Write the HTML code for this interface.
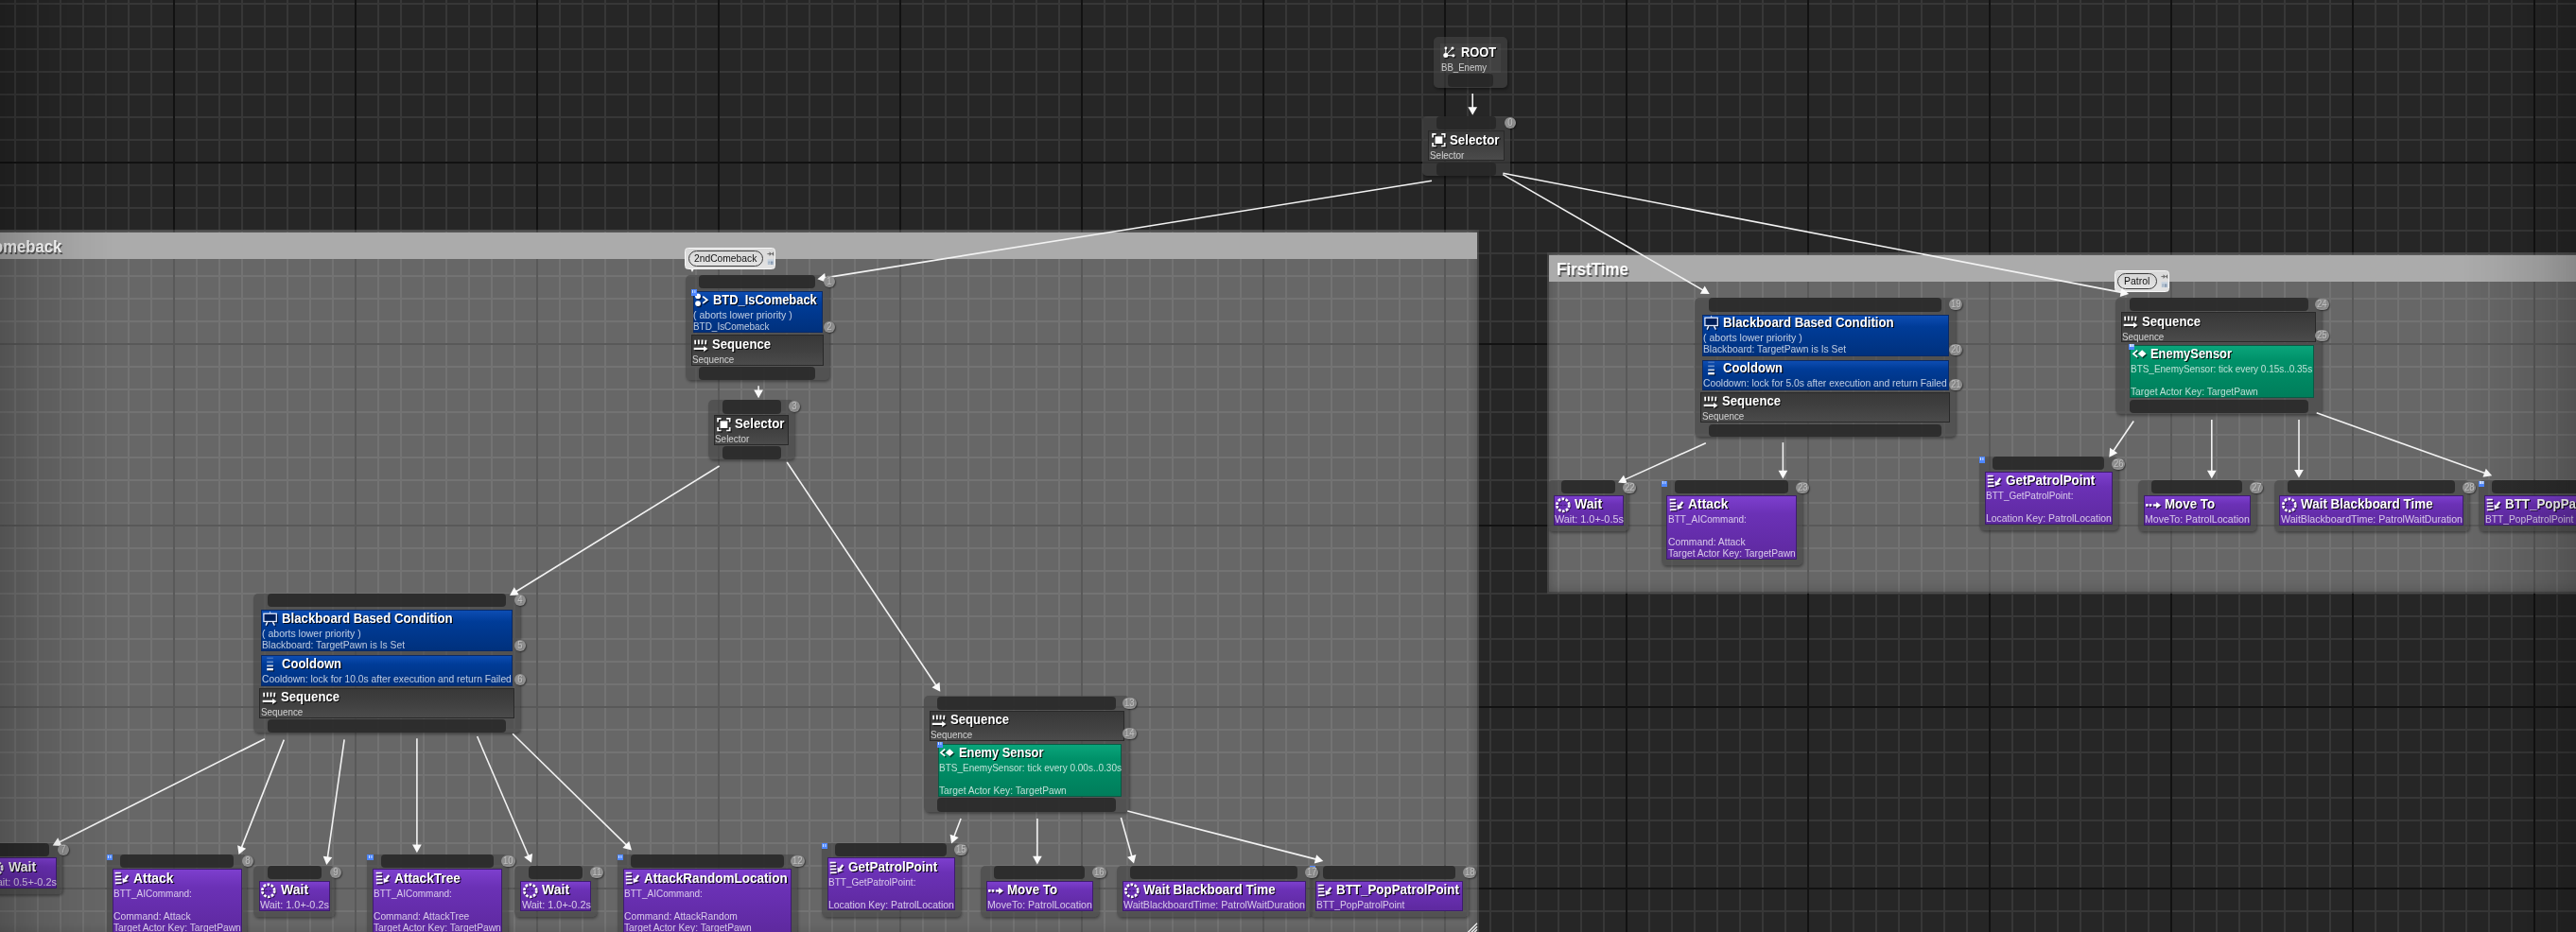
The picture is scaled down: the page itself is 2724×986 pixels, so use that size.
<!DOCTYPE html>
<html><head><meta charset="utf-8"><title>Behavior Tree</title><style>
html,body{margin:0;padding:0;background:#262626;}
body{width:2724px;height:986px;overflow:hidden;position:relative;font-family:"Liberation Sans",sans-serif;}
#g{will-change:transform;position:absolute;left:0;top:0;width:2724px;height:986px;overflow:hidden;}
#g>*{position:absolute;}
.grid{left:0;top:0;}
.cm{box-sizing:border-box;background:rgba(255,255,255,.302);box-shadow:inset 0 0 0 2px rgba(0,0,0,.22), inset 0 0 14px rgba(0,0,0,.30);}
.cmt{position:absolute;left:2px;right:2px;top:3px;height:27.6px;background:#ababab;}
.node{background:rgba(70,70,70,.62);border-radius:5px;box-shadow:1px 2px 3px rgba(0,0,0,.35);}
.rootin{background:rgba(255,255,255,.045);}
.pin{background:rgba(38,38,38,.82);border-radius:4px;}
.blk{box-sizing:border-box;border:1px solid rgba(0,0,0,.45);}
.cmp{background:linear-gradient(#383838,#414141 55%,#4b4b4b);border-color:#292929;}
.dec{background:linear-gradient(#0d4db3,#003c98 28%,#00317d);border-color:#0a2a66;}
.svc{background:linear-gradient(#0aa57b,#009169 28%,#007e5b);border-color:#0a5a44;}
.tsk{background:linear-gradient(#7d3fce,#6b31b6 28%,#5e299f);border-color:#3d1c6e;}
.t{white-space:nowrap;transform-origin:0 50%;display:block;line-height:normal;}
.tt{font-weight:700;font-size:15.0px;color:#fff;text-shadow:1.3px 1.4px .4px rgba(0,0,0,.9);}
.ts{font-size:10.6px;color:rgba(255,255,255,.74);}
.tc{font-weight:700;font-size:18.3px;color:#fff;text-shadow:1.5px 1.5px 0 rgba(0,0,0,.5);}
.tb{font-size:10.9px;color:#111;}
.ic{overflow:visible;}
.bdg{height:12px;border-radius:6px;background:#8f8f8f;box-shadow:1px 1px 1.5px rgba(0,0,0,.45);text-align:center;}
.bdg span{display:block;font-size:10.4px;line-height:12.6px;color:#bebebe;text-shadow:1px 1px 0 rgba(0,0,0,.15);transform:scaleX(.92);}
.bp{width:6.4px;height:6.4px;background:#4d86ff;}
.bp i{position:absolute;left:1.3px;top:.8px;width:1.3px;height:2.8px;background:#cfe0ff;box-shadow:2.4px 0 0 #cfe0ff;}
.bub{height:23.2px;box-sizing:border-box;background:linear-gradient(#d9d9d9,#e3e3e3);border:1.6px solid #f7f7f7;border-radius:3.5px;}
.pill{position:absolute;left:2.7px;top:2.5px;height:17px;box-sizing:border-box;border:1.2px solid #3a3a3a;border-radius:8.5px;background:linear-gradient(#d6d6d6,#e4e4e4);}
.bi{position:absolute;right:.2px;top:2.7px;}
.tail{position:absolute;left:5.4px;top:21.4px;width:0;height:0;border-left:2.4px solid transparent;border-right:2.4px solid transparent;border-top:4.4px solid #f4f4f4;}
.lines{left:0;top:0;pointer-events:none;}
.vig{left:0;top:0;width:2724px;height:986px;pointer-events:none;background:linear-gradient(to right,rgba(0,0,0,.2),rgba(0,0,0,.1) 38px,rgba(0,0,0,.03) 85px,transparent 120px,transparent calc(100% - 120px),rgba(0,0,0,.03) calc(100% - 85px),rgba(0,0,0,.1) calc(100% - 38px),rgba(0,0,0,.2));}
</style></head><body><div id="g">
<svg class="grid" width="2724" height="986" viewBox="0 0 2724 986"><defs><pattern id="pm" x="4" y="16" width="24" height="24" patternUnits="userSpaceOnUse"><path d="M0 12H24M12 0V24" stroke="#373737" stroke-width="2" fill="none"/></pattern><pattern id="pM" x="88" y="76" width="192" height="192" patternUnits="userSpaceOnUse"><path d="M0 96H192M96 0V192" stroke="#121212" stroke-width="2" fill="none"/></pattern></defs><rect width="2724" height="986" fill="url(#pm)"/><rect width="2724" height="986" fill="url(#pM)"/></svg>
<div class="cm" style="left:-29.30px;top:243.40px;width:1593.50px;height:746.60px"><div class="cmt"></div></div>
<span class="t tc" style="left:-18.70px;top:250.44px;transform:scaleX(0.9105);">Comeback</span>
<div class="cm" style="left:1636.30px;top:267.00px;width:1200.00px;height:360.80px"><div class="cmt"></div></div>
<span class="t tc" style="left:1645.60px;top:274.04px;transform:scaleX(0.9272);">FirstTime</span>

<div class="node" style="left:1516.00px;top:39.00px;width:78.00px;height:53.50px"></div>
<div class="rootin" style="left:1523px;top:46.2px;width:64px;height:30.4px"></div>
<div class="pin" style="left:1531.00px;top:78.00px;width:47.80px;height:14.00px"></div>
<svg class="ic" style="left:1526.00px;top:48.30px" width="17" height="17" viewBox="0 0 17 17" ><g transform="translate(1.2,1.3)" fill="#000" stroke="#000" opacity=".6"><circle cx="2.8" cy="10.5" r="2.5" stroke="none"/><circle cx="2.9" cy="3" r="1.4" stroke="none"/><circle cx="10" cy="3" r="1.6" stroke="none"/><circle cx="10.9" cy="10.8" r="1.6" stroke="none"/><path d="M2.8 10.5L2.9 3M2.8 10.5L10 3M2.8 10.5L10.9 10.8" fill="none" stroke-width="1"/></g><g fill="#fff" stroke="#fff"><circle cx="2.8" cy="10.5" r="2.5" stroke="none"/><circle cx="2.9" cy="3" r="1.4" stroke="none"/><circle cx="10" cy="3" r="1.6" stroke="none"/><circle cx="10.9" cy="10.8" r="1.6" stroke="none"/><path d="M2.8 10.5L2.9 3M2.8 10.5L10 3M2.8 10.5L10.9 10.8" fill="none" stroke-width="1"/></g></svg>
<span class="t tt" style="left:1545.00px;top:46.42px;transform:scaleX(0.8585);">ROOT</span>
<span class="t ts" style="left:1524.40px;top:65.41px;transform:scaleX(0.9071);">BB_Enemy</span>
<div class="node" style="left:1504.30px;top:123.00px;width:92.70px;height:63.00px"></div>
<div class="pin" style="left:1518.90px;top:123.20px;width:63.50px;height:14.30px"></div>
<div class="pin" style="left:1518.90px;top:172.00px;width:63.50px;height:13.50px"></div>
<div class="blk cmp" style="left:1510.20px;top:138.30px;width:80.90px;height:32.20px"></div>
<svg class="ic" style="left:1512.60px;top:140.40px" width="17" height="17" viewBox="0 0 17 17" ><g transform="translate(1.2,1.3)" fill="#000" stroke="#000" opacity=".6"><rect x="4.6" y="4.4" width="7.8" height="7.6" stroke="none"/><path d="M5.6 1.9H2.1V5.4M11.2 1.9H14.7V5.4M5.6 14.5H2.1V11M11.2 14.5H14.7V11" fill="none" stroke-width="1.7"/></g><g fill="#fff" stroke="#fff"><rect x="4.6" y="4.4" width="7.8" height="7.6" stroke="none"/><path d="M5.6 1.9H2.1V5.4M11.2 1.9H14.7V5.4M5.6 14.5H2.1V11M11.2 14.5H14.7V11" fill="none" stroke-width="1.7"/></g></svg>
<span class="t tt" style="left:1532.60px;top:138.92px;transform:scaleX(0.8869);">Selector</span>
<span class="t ts" style="left:1511.70px;top:157.81px;transform:scaleX(0.9360);">Selector</span>
<div class="node" style="left:724.50px;top:290.90px;width:152.50px;height:111.20px"></div>
<div class="pin" style="left:739.30px;top:291.10px;width:122.90px;height:14.30px"></div>
<div class="pin" style="left:739.30px;top:388.10px;width:122.90px;height:13.50px"></div>
<div class="blk dec" style="left:732.70px;top:308.30px;width:137.10px;height:44.10px"></div>
<svg class="ic" style="left:735.10px;top:310.10px" width="17" height="17" viewBox="0 0 17 17" ><g transform="translate(1.2,1.3)" fill="#000" stroke="#000" opacity=".6"><circle cx="3.05" cy="3.35" r="2.9" stroke="none"/><circle cx="3.05" cy="11.1" r="2.9" stroke="none"/><path d="M8.2 3.65L12.85 7.2L8.2 10.8" fill="none" stroke-width="1.7"/></g><g fill="#fff" stroke="#fff"><circle cx="3.05" cy="3.35" r="2.9" stroke="none"/><circle cx="3.05" cy="11.1" r="2.9" stroke="none"/><path d="M8.2 3.65L12.85 7.2L8.2 10.8" fill="none" stroke-width="1.7"/></g></svg>
<span class="t tt" style="left:754.20px;top:308.02px;transform:scaleX(0.8609);">BTD_IsComeback</span>
<span class="t ts" style="left:733.30px;top:327.11px;transform:scaleX(0.9930);">( aborts lower priority )</span>
<span class="t ts" style="left:733.30px;top:339.06px;transform:scaleX(0.9371);">BTD_IsComeback</span>
<div class="blk cmp" style="left:730.50px;top:354.40px;width:140.90px;height:32.20px"></div>
<svg class="ic" style="left:732.90px;top:356.50px" width="17" height="17" viewBox="0 0 17 17" ><g transform="translate(1.2,1.3)" fill="#000" stroke="#000" opacity=".6"><path d="M2.1 2.7L2.3 7.2M5.8 2.6L5.9 7.2M9.6 2.6L9.5 7.2M13.4 2.7L13.1 7.2" fill="none" stroke-width="1.8"/><path d="M0.7 11.9H12" fill="none" stroke-width="2.2"/><path d="M11.2 8.9L15.4 11.9L11.2 14.9Z" stroke="none"/></g><g fill="#fff" stroke="#fff"><path d="M2.1 2.7L2.3 7.2M5.8 2.6L5.9 7.2M9.6 2.6L9.5 7.2M13.4 2.7L13.1 7.2" fill="none" stroke-width="1.8"/><path d="M0.7 11.9H12" fill="none" stroke-width="2.2"/><path d="M11.2 8.9L15.4 11.9L11.2 14.9Z" stroke="none"/></g></svg>
<span class="t tt" style="left:752.90px;top:355.02px;transform:scaleX(0.8749);">Sequence</span>
<span class="t ts" style="left:732.00px;top:373.91px;transform:scaleX(0.9279);">Sequence</span>
<div class="bp" style="left:730.90px;top:306.40px"><i></i></div>
<div class="node" style="left:748.90px;top:423.20px;width:91.20px;height:63.00px"></div>
<div class="pin" style="left:763.50px;top:423.40px;width:62.00px;height:14.30px"></div>
<div class="pin" style="left:763.50px;top:472.20px;width:62.00px;height:13.50px"></div>
<div class="blk cmp" style="left:754.80px;top:438.50px;width:79.40px;height:32.20px"></div>
<svg class="ic" style="left:757.20px;top:440.60px" width="17" height="17" viewBox="0 0 17 17" ><g transform="translate(1.2,1.3)" fill="#000" stroke="#000" opacity=".6"><rect x="4.6" y="4.4" width="7.8" height="7.6" stroke="none"/><path d="M5.6 1.9H2.1V5.4M11.2 1.9H14.7V5.4M5.6 14.5H2.1V11M11.2 14.5H14.7V11" fill="none" stroke-width="1.7"/></g><g fill="#fff" stroke="#fff"><rect x="4.6" y="4.4" width="7.8" height="7.6" stroke="none"/><path d="M5.6 1.9H2.1V5.4M11.2 1.9H14.7V5.4M5.6 14.5H2.1V11M11.2 14.5H14.7V11" fill="none" stroke-width="1.7"/></g></svg>
<span class="t tt" style="left:777.20px;top:439.12px;transform:scaleX(0.8869);">Selector</span>
<span class="t ts" style="left:756.30px;top:458.01px;transform:scaleX(0.9360);">Selector</span>
<div class="node" style="left:268.20px;top:627.90px;width:281.50px;height:147.40px"></div>
<div class="pin" style="left:283.00px;top:628.10px;width:251.90px;height:14.30px"></div>
<div class="pin" style="left:283.00px;top:761.30px;width:251.90px;height:13.50px"></div>
<div class="blk dec" style="left:276.40px;top:645.30px;width:266.10px;height:44.10px"></div>
<svg class="ic" style="left:278.80px;top:647.10px" width="17" height="17" viewBox="0 0 17 17" ><g transform="translate(1.2,1.2)" opacity=".55"><rect x="-0.1" y="2.2" width="13.4" height="8.3" fill="none" stroke="#000" stroke-width="1.3"/><path d="M3.7 11.1L2.1 14.6M9.5 11.1L11.4 14.6" fill="none" stroke="#000" stroke-width="1.4"/></g><rect x="-0.1" y="2.2" width="13.4" height="8.3" fill="#00205a" stroke="#e4ecff" stroke-width="1.3"/><path d="M6.6 -0.2L5.6 1.6H7.6Z" fill="#e4ecff"/><path d="M3.7 11.1L2.1 14.6M9.5 11.1L11.4 14.6" fill="none" stroke="#f4f7ff" stroke-width="1.4"/></svg>
<span class="t tt" style="left:297.90px;top:645.02px;transform:scaleX(0.8808);">Blackboard Based Condition</span>
<span class="t ts" style="left:277.00px;top:664.11px;transform:scaleX(0.9930);">( aborts lower priority )</span>
<span class="t ts" style="left:277.00px;top:676.06px;transform:scaleX(0.9726);">Blackboard: TargetPawn is Is Set</span>
<div class="blk dec" style="left:276.40px;top:693.40px;width:266.10px;height:32.20px"></div>
<svg class="ic" style="left:278.80px;top:695.20px" width="17" height="17" viewBox="0 0 17 17" ><rect x="3.2" y="0.5" width="6.7" height="1.6" fill="#fff" opacity=".22"/><rect x="3.2" y="4.5" width="6.7" height="1.7" fill="#fff" opacity=".42"/><rect x="4.2" y="9.6" width="6.7" height="1.8" fill="#000" opacity=".4"/><rect x="3.2" y="8.5" width="6.7" height="1.8" fill="#fff" opacity=".78"/><rect x="4.4" y="13.2" width="6.7" height="2.3" fill="#000" opacity=".6"/><rect x="3.2" y="12" width="6.7" height="2.3" fill="#fff"/></svg>
<span class="t tt" style="left:297.90px;top:693.12px;transform:scaleX(0.8692);">Cooldown</span>
<span class="t ts" style="left:277.00px;top:712.21px;transform:scaleX(0.9719);">Cooldown: lock for 10.0s after execution and return Failed</span>
<div class="blk cmp" style="left:274.20px;top:727.60px;width:269.90px;height:32.20px"></div>
<svg class="ic" style="left:276.60px;top:729.70px" width="17" height="17" viewBox="0 0 17 17" ><g transform="translate(1.2,1.3)" fill="#000" stroke="#000" opacity=".6"><path d="M2.1 2.7L2.3 7.2M5.8 2.6L5.9 7.2M9.6 2.6L9.5 7.2M13.4 2.7L13.1 7.2" fill="none" stroke-width="1.8"/><path d="M0.7 11.9H12" fill="none" stroke-width="2.2"/><path d="M11.2 8.9L15.4 11.9L11.2 14.9Z" stroke="none"/></g><g fill="#fff" stroke="#fff"><path d="M2.1 2.7L2.3 7.2M5.8 2.6L5.9 7.2M9.6 2.6L9.5 7.2M13.4 2.7L13.1 7.2" fill="none" stroke-width="1.8"/><path d="M0.7 11.9H12" fill="none" stroke-width="2.2"/><path d="M11.2 8.9L15.4 11.9L11.2 14.9Z" stroke="none"/></g></svg>
<span class="t tt" style="left:296.60px;top:728.23px;transform:scaleX(0.8749);">Sequence</span>
<span class="t ts" style="left:275.70px;top:747.11px;transform:scaleX(0.9279);">Sequence</span>
<div class="node" style="left:976.60px;top:736.30px;width:217.80px;height:122.80px"></div>
<div class="pin" style="left:991.20px;top:736.50px;width:188.60px;height:14.30px"></div>
<div class="pin" style="left:991.20px;top:844.40px;width:188.60px;height:14.20px"></div>
<div class="blk cmp" style="left:982.50px;top:751.60px;width:206.00px;height:32.20px"></div>
<svg class="ic" style="left:984.90px;top:753.70px" width="17" height="17" viewBox="0 0 17 17" ><g transform="translate(1.2,1.3)" fill="#000" stroke="#000" opacity=".6"><path d="M2.1 2.7L2.3 7.2M5.8 2.6L5.9 7.2M9.6 2.6L9.5 7.2M13.4 2.7L13.1 7.2" fill="none" stroke-width="1.8"/><path d="M0.7 11.9H12" fill="none" stroke-width="2.2"/><path d="M11.2 8.9L15.4 11.9L11.2 14.9Z" stroke="none"/></g><g fill="#fff" stroke="#fff"><path d="M2.1 2.7L2.3 7.2M5.8 2.6L5.9 7.2M9.6 2.6L9.5 7.2M13.4 2.7L13.1 7.2" fill="none" stroke-width="1.8"/><path d="M0.7 11.9H12" fill="none" stroke-width="2.2"/><path d="M11.2 8.9L15.4 11.9L11.2 14.9Z" stroke="none"/></g></svg>
<span class="t tt" style="left:1004.90px;top:752.23px;transform:scaleX(0.8749);">Sequence</span>
<span class="t ts" style="left:984.00px;top:771.11px;transform:scaleX(0.9279);">Sequence</span>
<div class="blk svc" style="left:991.90px;top:786.90px;width:194.60px;height:56.00px"></div>
<svg class="ic" style="left:994.30px;top:788.70px" width="17" height="17" viewBox="0 0 17 17" ><g transform="translate(1.2,1.3)" fill="#000" stroke="#000" opacity=".6"><path d="M5.2 3.65L0.9 7.2L5.2 10.8" fill="none" stroke-width="1.7"/><path d="M10.2 3.3L14.55 7.2L10.2 11.1L5.85 7.2Z" stroke="none"/></g><g fill="#fff" stroke="#fff"><path d="M5.2 3.65L0.9 7.2L5.2 10.8" fill="none" stroke-width="1.7"/><path d="M10.2 3.3L14.55 7.2L10.2 11.1L5.85 7.2Z" stroke="none"/></g></svg>
<span class="t tt" style="left:1014.00px;top:786.62px;transform:scaleX(0.8579);">Enemy Sensor</span>
<span class="t ts" style="left:992.50px;top:805.71px;transform:scaleX(0.9445);">BTS_EnemySensor: tick every 0.00s..0.30s</span>
<span class="t ts" style="left:992.50px;top:829.61px;transform:scaleX(0.9674);">Target Actor Key: TargetPawn</span>
<div class="bp" style="left:990.90px;top:784.60px"><i></i></div>
<div class="node" style="left:1792.20px;top:315.10px;width:275.60px;height:147.40px"></div>
<div class="pin" style="left:1807.00px;top:315.30px;width:246.00px;height:14.30px"></div>
<div class="pin" style="left:1807.00px;top:448.50px;width:246.00px;height:13.50px"></div>
<div class="blk dec" style="left:1800.40px;top:332.50px;width:260.20px;height:44.10px"></div>
<svg class="ic" style="left:1802.80px;top:334.30px" width="17" height="17" viewBox="0 0 17 17" ><g transform="translate(1.2,1.2)" opacity=".55"><rect x="-0.1" y="2.2" width="13.4" height="8.3" fill="none" stroke="#000" stroke-width="1.3"/><path d="M3.7 11.1L2.1 14.6M9.5 11.1L11.4 14.6" fill="none" stroke="#000" stroke-width="1.4"/></g><rect x="-0.1" y="2.2" width="13.4" height="8.3" fill="#00205a" stroke="#e4ecff" stroke-width="1.3"/><path d="M6.6 -0.2L5.6 1.6H7.6Z" fill="#e4ecff"/><path d="M3.7 11.1L2.1 14.6M9.5 11.1L11.4 14.6" fill="none" stroke="#f4f7ff" stroke-width="1.4"/></svg>
<span class="t tt" style="left:1821.90px;top:332.23px;transform:scaleX(0.8808);">Blackboard Based Condition</span>
<span class="t ts" style="left:1801.00px;top:351.31px;transform:scaleX(0.9930);">( aborts lower priority )</span>
<span class="t ts" style="left:1801.00px;top:363.26px;transform:scaleX(0.9726);">Blackboard: TargetPawn is Is Set</span>
<div class="blk dec" style="left:1800.40px;top:380.60px;width:260.20px;height:32.20px"></div>
<svg class="ic" style="left:1802.80px;top:382.40px" width="17" height="17" viewBox="0 0 17 17" ><rect x="3.2" y="0.5" width="6.7" height="1.6" fill="#fff" opacity=".22"/><rect x="3.2" y="4.5" width="6.7" height="1.7" fill="#fff" opacity=".42"/><rect x="4.2" y="9.6" width="6.7" height="1.8" fill="#000" opacity=".4"/><rect x="3.2" y="8.5" width="6.7" height="1.8" fill="#fff" opacity=".78"/><rect x="4.4" y="13.2" width="6.7" height="2.3" fill="#000" opacity=".6"/><rect x="3.2" y="12" width="6.7" height="2.3" fill="#fff"/></svg>
<span class="t tt" style="left:1821.90px;top:380.33px;transform:scaleX(0.8692);">Cooldown</span>
<span class="t ts" style="left:1801.00px;top:399.41px;transform:scaleX(0.9705);">Cooldown: lock for 5.0s after execution and return Failed</span>
<div class="blk cmp" style="left:1798.20px;top:414.80px;width:264.00px;height:32.20px"></div>
<svg class="ic" style="left:1800.60px;top:416.90px" width="17" height="17" viewBox="0 0 17 17" ><g transform="translate(1.2,1.3)" fill="#000" stroke="#000" opacity=".6"><path d="M2.1 2.7L2.3 7.2M5.8 2.6L5.9 7.2M9.6 2.6L9.5 7.2M13.4 2.7L13.1 7.2" fill="none" stroke-width="1.8"/><path d="M0.7 11.9H12" fill="none" stroke-width="2.2"/><path d="M11.2 8.9L15.4 11.9L11.2 14.9Z" stroke="none"/></g><g fill="#fff" stroke="#fff"><path d="M2.1 2.7L2.3 7.2M5.8 2.6L5.9 7.2M9.6 2.6L9.5 7.2M13.4 2.7L13.1 7.2" fill="none" stroke-width="1.8"/><path d="M0.7 11.9H12" fill="none" stroke-width="2.2"/><path d="M11.2 8.9L15.4 11.9L11.2 14.9Z" stroke="none"/></g></svg>
<span class="t tt" style="left:1820.60px;top:415.43px;transform:scaleX(0.8749);">Sequence</span>
<span class="t ts" style="left:1799.70px;top:434.31px;transform:scaleX(0.9279);">Sequence</span>
<div class="node" style="left:2237.00px;top:314.80px;width:218.20px;height:122.80px"></div>
<div class="pin" style="left:2251.60px;top:315.00px;width:189.00px;height:14.30px"></div>
<div class="pin" style="left:2251.60px;top:422.90px;width:189.00px;height:14.20px"></div>
<div class="blk cmp" style="left:2242.90px;top:330.10px;width:206.40px;height:32.20px"></div>
<svg class="ic" style="left:2245.30px;top:332.20px" width="17" height="17" viewBox="0 0 17 17" ><g transform="translate(1.2,1.3)" fill="#000" stroke="#000" opacity=".6"><path d="M2.1 2.7L2.3 7.2M5.8 2.6L5.9 7.2M9.6 2.6L9.5 7.2M13.4 2.7L13.1 7.2" fill="none" stroke-width="1.8"/><path d="M0.7 11.9H12" fill="none" stroke-width="2.2"/><path d="M11.2 8.9L15.4 11.9L11.2 14.9Z" stroke="none"/></g><g fill="#fff" stroke="#fff"><path d="M2.1 2.7L2.3 7.2M5.8 2.6L5.9 7.2M9.6 2.6L9.5 7.2M13.4 2.7L13.1 7.2" fill="none" stroke-width="1.8"/><path d="M0.7 11.9H12" fill="none" stroke-width="2.2"/><path d="M11.2 8.9L15.4 11.9L11.2 14.9Z" stroke="none"/></g></svg>
<span class="t tt" style="left:2265.30px;top:330.73px;transform:scaleX(0.8749);">Sequence</span>
<span class="t ts" style="left:2244.40px;top:349.61px;transform:scaleX(0.9279);">Sequence</span>
<div class="blk svc" style="left:2252.30px;top:365.40px;width:195.00px;height:56.00px"></div>
<svg class="ic" style="left:2254.70px;top:367.20px" width="17" height="17" viewBox="0 0 17 17" ><g transform="translate(1.2,1.3)" fill="#000" stroke="#000" opacity=".6"><path d="M5.2 3.65L0.9 7.2L5.2 10.8" fill="none" stroke-width="1.7"/><path d="M10.2 3.3L14.55 7.2L10.2 11.1L5.85 7.2Z" stroke="none"/></g><g fill="#fff" stroke="#fff"><path d="M5.2 3.65L0.9 7.2L5.2 10.8" fill="none" stroke-width="1.7"/><path d="M10.2 3.3L14.55 7.2L10.2 11.1L5.85 7.2Z" stroke="none"/></g></svg>
<span class="t tt" style="left:2274.40px;top:365.13px;transform:scaleX(0.8596);">EnemySensor</span>
<span class="t ts" style="left:2252.90px;top:384.21px;transform:scaleX(0.9403);">BTS_EnemySensor: tick every 0.15s..0.35s</span>
<span class="t ts" style="left:2252.90px;top:408.11px;transform:scaleX(0.9674);">Target Actor Key: TargetPawn</span>
<div class="bp" style="left:2251.00px;top:363.60px"><i></i></div>
<div class="node" style="left:-20.00px;top:891.90px;width:86.30px;height:53.90px"></div>
<div class="pin" style="left:-5.40px;top:891.90px;width:57.10px;height:14.10px"></div>
<div class="blk tsk" style="left:-14.10px;top:907.40px;width:74.50px;height:32.20px"></div>
<svg class="ic" style="left:-11.70px;top:909.50px" width="17" height="17" viewBox="0 0 17 17" ><circle cx="8.8" cy="9.3" r="6.5" fill="none" stroke="#000" stroke-width="2.7" stroke-dasharray="2.65 1.434" opacity=".55"/><circle cx="7.8" cy="8.3" r="6.5" fill="none" stroke="#fff" stroke-width="2.7" stroke-dasharray="2.65 1.434"/><path d="M4.4 8.6H7M8.6 8.6H11.2" stroke="#34165e" stroke-width="1" opacity=".75"/></svg>
<span class="t tt" style="left:8.50px;top:908.02px;transform:scaleX(0.9355);">Wait</span>
<span class="t ts" style="left:-12.90px;top:926.91px;transform:scaleX(1.0240);">Wait: 0.5+-0.2s</span>
<div class="node" style="left:112.60px;top:903.80px;width:148.80px;height:89.60px"></div>
<div class="pin" style="left:127.20px;top:903.80px;width:119.60px;height:14.10px"></div>
<div class="blk tsk" style="left:118.50px;top:919.30px;width:137.00px;height:67.90px"></div>
<svg class="ic" style="left:120.90px;top:921.40px" width="17" height="17" viewBox="0 0 17 17" ><g transform="translate(1.2,1.3)" fill="#000" stroke="#000" opacity=".6"><path d="M0.6 2.7L6.8 2.5M0.7 6.3L7 6.1M0.8 9.7L7.3 9.5M0.8 13.3L7.6 13.1" fill="none" stroke-width="1.7"/><path d="M14.3 5L11.3 9.2" fill="none" stroke-width="2.3"/><path d="M8.6 7.7L8.8 13L14.7 11Z" stroke="none"/></g><g fill="#fff" stroke="#fff"><path d="M0.6 2.7L6.8 2.5M0.7 6.3L7 6.1M0.8 9.7L7.3 9.5M0.8 13.3L7.6 13.1" fill="none" stroke-width="1.7"/><path d="M14.3 5L11.3 9.2" fill="none" stroke-width="2.3"/><path d="M8.6 7.7L8.8 13L14.7 11Z" stroke="none"/></g></svg>
<span class="t tt" style="left:141.10px;top:919.92px;transform:scaleX(0.9258);">Attack</span>
<span class="t ts" style="left:119.70px;top:938.81px;transform:scaleX(0.9445);">BTT_AICommand:</span>
<span class="t ts" style="left:119.70px;top:962.71px;transform:scaleX(0.9760);">Command: Attack</span>
<span class="t ts" style="left:119.70px;top:974.66px;transform:scaleX(0.9674);">Target Actor Key: TargetPawn</span>
<div class="bp" style="left:112.80px;top:904.00px"><i></i></div>
<div class="node" style="left:268.10px;top:916.00px;width:86.30px;height:53.90px"></div>
<div class="pin" style="left:282.70px;top:916.00px;width:57.10px;height:14.10px"></div>
<div class="blk tsk" style="left:274.00px;top:931.50px;width:74.50px;height:32.20px"></div>
<svg class="ic" style="left:276.40px;top:933.60px" width="17" height="17" viewBox="0 0 17 17" ><circle cx="8.8" cy="9.3" r="6.5" fill="none" stroke="#000" stroke-width="2.7" stroke-dasharray="2.65 1.434" opacity=".55"/><circle cx="7.8" cy="8.3" r="6.5" fill="none" stroke="#fff" stroke-width="2.7" stroke-dasharray="2.65 1.434"/><path d="M4.4 8.6H7M8.6 8.6H11.2" stroke="#34165e" stroke-width="1" opacity=".75"/></svg>
<span class="t tt" style="left:296.60px;top:932.12px;transform:scaleX(0.9355);">Wait</span>
<span class="t ts" style="left:275.20px;top:951.01px;transform:scaleX(1.0240);">Wait: 1.0+-0.2s</span>
<div class="node" style="left:388.20px;top:903.80px;width:148.80px;height:89.60px"></div>
<div class="pin" style="left:402.80px;top:903.80px;width:119.60px;height:14.10px"></div>
<div class="blk tsk" style="left:394.10px;top:919.30px;width:137.00px;height:67.90px"></div>
<svg class="ic" style="left:396.50px;top:921.40px" width="17" height="17" viewBox="0 0 17 17" ><g transform="translate(1.2,1.3)" fill="#000" stroke="#000" opacity=".6"><path d="M0.6 2.7L6.8 2.5M0.7 6.3L7 6.1M0.8 9.7L7.3 9.5M0.8 13.3L7.6 13.1" fill="none" stroke-width="1.7"/><path d="M14.3 5L11.3 9.2" fill="none" stroke-width="2.3"/><path d="M8.6 7.7L8.8 13L14.7 11Z" stroke="none"/></g><g fill="#fff" stroke="#fff"><path d="M0.6 2.7L6.8 2.5M0.7 6.3L7 6.1M0.8 9.7L7.3 9.5M0.8 13.3L7.6 13.1" fill="none" stroke-width="1.7"/><path d="M14.3 5L11.3 9.2" fill="none" stroke-width="2.3"/><path d="M8.6 7.7L8.8 13L14.7 11Z" stroke="none"/></g></svg>
<span class="t tt" style="left:416.70px;top:919.92px;transform:scaleX(0.9119);">AttackTree</span>
<span class="t ts" style="left:395.30px;top:938.81px;transform:scaleX(0.9445);">BTT_AICommand:</span>
<span class="t ts" style="left:395.30px;top:962.71px;transform:scaleX(0.9642);">Command: AttackTree</span>
<span class="t ts" style="left:395.30px;top:974.66px;transform:scaleX(0.9674);">Target Actor Key: TargetPawn</span>
<div class="bp" style="left:388.40px;top:904.00px"><i></i></div>
<div class="node" style="left:544.40px;top:916.00px;width:86.30px;height:53.90px"></div>
<div class="pin" style="left:559.00px;top:916.00px;width:57.10px;height:14.10px"></div>
<div class="blk tsk" style="left:550.30px;top:931.50px;width:74.50px;height:32.20px"></div>
<svg class="ic" style="left:552.70px;top:933.60px" width="17" height="17" viewBox="0 0 17 17" ><circle cx="8.8" cy="9.3" r="6.5" fill="none" stroke="#000" stroke-width="2.7" stroke-dasharray="2.65 1.434" opacity=".55"/><circle cx="7.8" cy="8.3" r="6.5" fill="none" stroke="#fff" stroke-width="2.7" stroke-dasharray="2.65 1.434"/><path d="M4.4 8.6H7M8.6 8.6H11.2" stroke="#34165e" stroke-width="1" opacity=".75"/></svg>
<span class="t tt" style="left:572.90px;top:932.12px;transform:scaleX(0.9355);">Wait</span>
<span class="t ts" style="left:551.50px;top:951.01px;transform:scaleX(1.0240);">Wait: 1.0+-0.2s</span>
<div class="node" style="left:652.60px;top:903.80px;width:190.60px;height:89.60px"></div>
<div class="pin" style="left:667.20px;top:903.80px;width:161.40px;height:14.10px"></div>
<div class="blk tsk" style="left:658.50px;top:919.30px;width:178.80px;height:67.90px"></div>
<svg class="ic" style="left:660.90px;top:921.40px" width="17" height="17" viewBox="0 0 17 17" ><g transform="translate(1.2,1.3)" fill="#000" stroke="#000" opacity=".6"><path d="M0.6 2.7L6.8 2.5M0.7 6.3L7 6.1M0.8 9.7L7.3 9.5M0.8 13.3L7.6 13.1" fill="none" stroke-width="1.7"/><path d="M14.3 5L11.3 9.2" fill="none" stroke-width="2.3"/><path d="M8.6 7.7L8.8 13L14.7 11Z" stroke="none"/></g><g fill="#fff" stroke="#fff"><path d="M0.6 2.7L6.8 2.5M0.7 6.3L7 6.1M0.8 9.7L7.3 9.5M0.8 13.3L7.6 13.1" fill="none" stroke-width="1.7"/><path d="M14.3 5L11.3 9.2" fill="none" stroke-width="2.3"/><path d="M8.6 7.7L8.8 13L14.7 11Z" stroke="none"/></g></svg>
<span class="t tt" style="left:681.10px;top:919.92px;transform:scaleX(0.9017);">AttackRandomLocation</span>
<span class="t ts" style="left:659.70px;top:938.81px;transform:scaleX(0.9445);">BTT_AICommand:</span>
<span class="t ts" style="left:659.70px;top:962.71px;transform:scaleX(0.9699);">Command: AttackRandom</span>
<span class="t ts" style="left:659.70px;top:974.66px;transform:scaleX(0.9674);">Target Actor Key: TargetPawn</span>
<div class="bp" style="left:652.80px;top:904.00px"><i></i></div>
<div class="node" style="left:868.60px;top:891.90px;width:147.00px;height:77.70px"></div>
<div class="pin" style="left:883.20px;top:891.90px;width:117.80px;height:14.10px"></div>
<div class="blk tsk" style="left:874.50px;top:907.40px;width:135.20px;height:56.00px"></div>
<svg class="ic" style="left:876.90px;top:909.50px" width="17" height="17" viewBox="0 0 17 17" ><g transform="translate(1.2,1.3)" fill="#000" stroke="#000" opacity=".6"><path d="M0.6 2.7L6.8 2.5M0.7 6.3L7 6.1M0.8 9.7L7.3 9.5M0.8 13.3L7.6 13.1" fill="none" stroke-width="1.7"/><path d="M14.3 5L11.3 9.2" fill="none" stroke-width="2.3"/><path d="M8.6 7.7L8.8 13L14.7 11Z" stroke="none"/></g><g fill="#fff" stroke="#fff"><path d="M0.6 2.7L6.8 2.5M0.7 6.3L7 6.1M0.8 9.7L7.3 9.5M0.8 13.3L7.6 13.1" fill="none" stroke-width="1.7"/><path d="M14.3 5L11.3 9.2" fill="none" stroke-width="2.3"/><path d="M8.6 7.7L8.8 13L14.7 11Z" stroke="none"/></g></svg>
<span class="t tt" style="left:897.10px;top:908.02px;transform:scaleX(0.8980);">GetPatrolPoint</span>
<span class="t ts" style="left:875.70px;top:926.91px;transform:scaleX(0.9458);">BTT_GetPatrolPoint:</span>
<span class="t ts" style="left:875.70px;top:950.81px;transform:scaleX(0.9848);">Location Key: PatrolLocation</span>
<div class="bp" style="left:868.80px;top:892.10px"><i></i></div>
<div class="node" style="left:1036.80px;top:916.00px;width:125.20px;height:53.90px"></div>
<div class="pin" style="left:1051.40px;top:916.00px;width:96.00px;height:14.10px"></div>
<div class="blk tsk" style="left:1042.70px;top:931.50px;width:113.40px;height:32.20px"></div>
<svg class="ic" style="left:1045.10px;top:933.60px" width="17" height="17" viewBox="0 0 17 17" ><g transform="translate(1.2,1.3)" fill="#000" stroke="#000" opacity=".6"><rect x="0" y="7" width="2.6" height="2.7" rx=".6" stroke="none"/><rect x="3.7" y="7" width="2.6" height="2.7" rx=".6" stroke="none"/><path d="M7.9 8.45H12.5" fill="none" stroke-width="2.2"/><path d="M11.2 4.9L16 8.45L11.2 12Z" stroke="none"/></g><g fill="#fff" stroke="#fff"><rect x="0" y="7" width="2.6" height="2.7" rx=".6" stroke="none"/><rect x="3.7" y="7" width="2.6" height="2.7" rx=".6" stroke="none"/><path d="M7.9 8.45H12.5" fill="none" stroke-width="2.2"/><path d="M11.2 4.9L16 8.45L11.2 12Z" stroke="none"/></g></svg>
<span class="t tt" style="left:1065.30px;top:932.12px;transform:scaleX(0.8891);">Move To</span>
<span class="t ts" style="left:1043.90px;top:951.01px;transform:scaleX(1.0011);">MoveTo: PatrolLocation</span>
<div class="node" style="left:1180.60px;top:916.00px;width:206.20px;height:53.90px"></div>
<div class="pin" style="left:1195.20px;top:916.00px;width:177.00px;height:14.10px"></div>
<div class="blk tsk" style="left:1186.50px;top:931.50px;width:194.40px;height:32.20px"></div>
<svg class="ic" style="left:1188.90px;top:933.60px" width="17" height="17" viewBox="0 0 17 17" ><circle cx="8.8" cy="9.3" r="6.5" fill="none" stroke="#000" stroke-width="2.7" stroke-dasharray="2.65 1.434" opacity=".55"/><circle cx="7.8" cy="8.3" r="6.5" fill="none" stroke="#fff" stroke-width="2.7" stroke-dasharray="2.65 1.434"/><path d="M4.4 8.6H7M8.6 8.6H11.2" stroke="#34165e" stroke-width="1" opacity=".75"/></svg>
<span class="t tt" style="left:1209.10px;top:932.12px;transform:scaleX(0.8956);">Wait Blackboard Time</span>
<span class="t ts" style="left:1187.70px;top:951.01px;transform:scaleX(1.0036);">WaitBlackboardTime: PatrolWaitDuration</span>
<div class="node" style="left:1384.80px;top:916.00px;width:168.60px;height:53.90px"></div>
<div class="pin" style="left:1399.40px;top:916.00px;width:139.40px;height:14.10px"></div>
<div class="blk tsk" style="left:1390.70px;top:931.50px;width:156.80px;height:32.20px"></div>
<svg class="ic" style="left:1393.10px;top:933.60px" width="17" height="17" viewBox="0 0 17 17" ><g transform="translate(1.2,1.3)" fill="#000" stroke="#000" opacity=".6"><path d="M0.6 2.7L6.8 2.5M0.7 6.3L7 6.1M0.8 9.7L7.3 9.5M0.8 13.3L7.6 13.1" fill="none" stroke-width="1.7"/><path d="M14.3 5L11.3 9.2" fill="none" stroke-width="2.3"/><path d="M8.6 7.7L8.8 13L14.7 11Z" stroke="none"/></g><g fill="#fff" stroke="#fff"><path d="M0.6 2.7L6.8 2.5M0.7 6.3L7 6.1M0.8 9.7L7.3 9.5M0.8 13.3L7.6 13.1" fill="none" stroke-width="1.7"/><path d="M14.3 5L11.3 9.2" fill="none" stroke-width="2.3"/><path d="M8.6 7.7L8.8 13L14.7 11Z" stroke="none"/></g></svg>
<span class="t tt" style="left:1413.30px;top:932.12px;transform:scaleX(0.8911);">BTT_PopPatrolPoint</span>
<span class="t ts" style="left:1391.90px;top:951.01px;transform:scaleX(0.9666);">BTT_PopPatrolPoint</span>
<div class="bp" style="left:1385.00px;top:916.20px"><i></i></div>
<div class="node" style="left:1636.60px;top:508.30px;width:85.90px;height:53.90px"></div>
<div class="pin" style="left:1651.20px;top:508.30px;width:56.70px;height:14.10px"></div>
<div class="blk tsk" style="left:1642.50px;top:523.80px;width:74.10px;height:32.20px"></div>
<svg class="ic" style="left:1644.90px;top:525.90px" width="17" height="17" viewBox="0 0 17 17" ><circle cx="8.8" cy="9.3" r="6.5" fill="none" stroke="#000" stroke-width="2.7" stroke-dasharray="2.65 1.434" opacity=".55"/><circle cx="7.8" cy="8.3" r="6.5" fill="none" stroke="#fff" stroke-width="2.7" stroke-dasharray="2.65 1.434"/><path d="M4.4 8.6H7M8.6 8.6H11.2" stroke="#34165e" stroke-width="1" opacity=".75"/></svg>
<span class="t tt" style="left:1665.10px;top:524.42px;transform:scaleX(0.9355);">Wait</span>
<span class="t ts" style="left:1643.70px;top:543.31px;transform:scaleX(1.0240);">Wait: 1.0+-0.5s</span>
<div class="node" style="left:1756.50px;top:508.30px;width:149.10px;height:89.60px"></div>
<div class="pin" style="left:1771.10px;top:508.30px;width:119.90px;height:14.10px"></div>
<div class="blk tsk" style="left:1762.40px;top:523.80px;width:137.30px;height:67.90px"></div>
<svg class="ic" style="left:1764.80px;top:525.90px" width="17" height="17" viewBox="0 0 17 17" ><g transform="translate(1.2,1.3)" fill="#000" stroke="#000" opacity=".6"><path d="M0.6 2.7L6.8 2.5M0.7 6.3L7 6.1M0.8 9.7L7.3 9.5M0.8 13.3L7.6 13.1" fill="none" stroke-width="1.7"/><path d="M14.3 5L11.3 9.2" fill="none" stroke-width="2.3"/><path d="M8.6 7.7L8.8 13L14.7 11Z" stroke="none"/></g><g fill="#fff" stroke="#fff"><path d="M0.6 2.7L6.8 2.5M0.7 6.3L7 6.1M0.8 9.7L7.3 9.5M0.8 13.3L7.6 13.1" fill="none" stroke-width="1.7"/><path d="M14.3 5L11.3 9.2" fill="none" stroke-width="2.3"/><path d="M8.6 7.7L8.8 13L14.7 11Z" stroke="none"/></g></svg>
<span class="t tt" style="left:1785.00px;top:524.42px;transform:scaleX(0.9258);">Attack</span>
<span class="t ts" style="left:1763.60px;top:543.31px;transform:scaleX(0.9445);">BTT_AICommand:</span>
<span class="t ts" style="left:1763.60px;top:567.21px;transform:scaleX(0.9760);">Command: Attack</span>
<span class="t ts" style="left:1763.60px;top:579.16px;transform:scaleX(0.9674);">Target Actor Key: TargetPawn</span>
<div class="bp" style="left:1756.70px;top:508.50px"><i></i></div>
<div class="node" style="left:2092.60px;top:483.20px;width:147.10px;height:77.70px"></div>
<div class="pin" style="left:2107.20px;top:483.20px;width:117.90px;height:14.10px"></div>
<div class="blk tsk" style="left:2098.50px;top:498.70px;width:135.30px;height:56.00px"></div>
<svg class="ic" style="left:2100.90px;top:500.80px" width="17" height="17" viewBox="0 0 17 17" ><g transform="translate(1.2,1.3)" fill="#000" stroke="#000" opacity=".6"><path d="M0.6 2.7L6.8 2.5M0.7 6.3L7 6.1M0.8 9.7L7.3 9.5M0.8 13.3L7.6 13.1" fill="none" stroke-width="1.7"/><path d="M14.3 5L11.3 9.2" fill="none" stroke-width="2.3"/><path d="M8.6 7.7L8.8 13L14.7 11Z" stroke="none"/></g><g fill="#fff" stroke="#fff"><path d="M0.6 2.7L6.8 2.5M0.7 6.3L7 6.1M0.8 9.7L7.3 9.5M0.8 13.3L7.6 13.1" fill="none" stroke-width="1.7"/><path d="M14.3 5L11.3 9.2" fill="none" stroke-width="2.3"/><path d="M8.6 7.7L8.8 13L14.7 11Z" stroke="none"/></g></svg>
<span class="t tt" style="left:2121.10px;top:499.32px;transform:scaleX(0.8980);">GetPatrolPoint</span>
<span class="t ts" style="left:2099.70px;top:518.21px;transform:scaleX(0.9458);">BTT_GetPatrolPoint:</span>
<span class="t ts" style="left:2099.70px;top:542.11px;transform:scaleX(0.9848);">Location Key: PatrolLocation</span>
<div class="bp" style="left:2092.80px;top:483.40px"><i></i></div>
<div class="node" style="left:2260.60px;top:508.30px;width:125.20px;height:53.90px"></div>
<div class="pin" style="left:2275.20px;top:508.30px;width:96.00px;height:14.10px"></div>
<div class="blk tsk" style="left:2266.50px;top:523.80px;width:113.40px;height:32.20px"></div>
<svg class="ic" style="left:2268.90px;top:525.90px" width="17" height="17" viewBox="0 0 17 17" ><g transform="translate(1.2,1.3)" fill="#000" stroke="#000" opacity=".6"><rect x="0" y="7" width="2.6" height="2.7" rx=".6" stroke="none"/><rect x="3.7" y="7" width="2.6" height="2.7" rx=".6" stroke="none"/><path d="M7.9 8.45H12.5" fill="none" stroke-width="2.2"/><path d="M11.2 4.9L16 8.45L11.2 12Z" stroke="none"/></g><g fill="#fff" stroke="#fff"><rect x="0" y="7" width="2.6" height="2.7" rx=".6" stroke="none"/><rect x="3.7" y="7" width="2.6" height="2.7" rx=".6" stroke="none"/><path d="M7.9 8.45H12.5" fill="none" stroke-width="2.2"/><path d="M11.2 4.9L16 8.45L11.2 12Z" stroke="none"/></g></svg>
<span class="t tt" style="left:2289.10px;top:524.42px;transform:scaleX(0.8891);">Move To</span>
<span class="t ts" style="left:2267.70px;top:543.31px;transform:scaleX(1.0011);">MoveTo: PatrolLocation</span>
<div class="node" style="left:2404.50px;top:508.30px;width:206.30px;height:53.90px"></div>
<div class="pin" style="left:2419.10px;top:508.30px;width:177.10px;height:14.10px"></div>
<div class="blk tsk" style="left:2410.40px;top:523.80px;width:194.50px;height:32.20px"></div>
<svg class="ic" style="left:2412.80px;top:525.90px" width="17" height="17" viewBox="0 0 17 17" ><circle cx="8.8" cy="9.3" r="6.5" fill="none" stroke="#000" stroke-width="2.7" stroke-dasharray="2.65 1.434" opacity=".55"/><circle cx="7.8" cy="8.3" r="6.5" fill="none" stroke="#fff" stroke-width="2.7" stroke-dasharray="2.65 1.434"/><path d="M4.4 8.6H7M8.6 8.6H11.2" stroke="#34165e" stroke-width="1" opacity=".75"/></svg>
<span class="t tt" style="left:2433.00px;top:524.42px;transform:scaleX(0.8956);">Wait Blackboard Time</span>
<span class="t ts" style="left:2411.60px;top:543.31px;transform:scaleX(1.0036);">WaitBlackboardTime: PatrolWaitDuration</span>
<div class="node" style="left:2620.80px;top:508.30px;width:168.60px;height:53.90px"></div>
<div class="pin" style="left:2635.40px;top:508.30px;width:139.40px;height:14.10px"></div>
<div class="blk tsk" style="left:2626.70px;top:523.80px;width:156.80px;height:32.20px"></div>
<svg class="ic" style="left:2629.10px;top:525.90px" width="17" height="17" viewBox="0 0 17 17" ><g transform="translate(1.2,1.3)" fill="#000" stroke="#000" opacity=".6"><path d="M0.6 2.7L6.8 2.5M0.7 6.3L7 6.1M0.8 9.7L7.3 9.5M0.8 13.3L7.6 13.1" fill="none" stroke-width="1.7"/><path d="M14.3 5L11.3 9.2" fill="none" stroke-width="2.3"/><path d="M8.6 7.7L8.8 13L14.7 11Z" stroke="none"/></g><g fill="#fff" stroke="#fff"><path d="M0.6 2.7L6.8 2.5M0.7 6.3L7 6.1M0.8 9.7L7.3 9.5M0.8 13.3L7.6 13.1" fill="none" stroke-width="1.7"/><path d="M14.3 5L11.3 9.2" fill="none" stroke-width="2.3"/><path d="M8.6 7.7L8.8 13L14.7 11Z" stroke="none"/></g></svg>
<span class="t tt" style="left:2649.30px;top:524.42px;transform:scaleX(0.8911);">BTT_PopPatrolPoint</span>
<span class="t ts" style="left:2627.90px;top:543.31px;transform:scaleX(0.9666);">BTT_PopPatrolPoint</span>
<div class="bp" style="left:2621.00px;top:508.50px"><i></i></div>
<div class="bub" style="left:723.90px;top:261.80px;width:96.20px"><div class="pill" style="width:79.80px"></div><svg class="bi" width="8" height="17" viewBox="0 0 8 17"><path d="M0.4 3.6H3" stroke="#6a6a6a" stroke-width="1" fill="none"/><path d="M2.6 1.2L5 3.6L2.6 6ZM7.2 1.2L4.8 3.6L7.2 6Z" fill="#6a6a6a"/><rect x="0.6" y="9.2" width="6.8" height="5.8" fill="#c6d2de"/><path d="M1.6 12.2H2.6M3.8 12.2H6.4M1.6 14H2.4M3.8 14H6.4" stroke="#5a6f8c" stroke-width=".9"/></svg><i class="tail"></i></div>
<span class="t tb" style="left:734.30px;top:267.04px;transform:scaleX(0.9437);">2ndComeback</span>
<div class="bub" style="left:2235.80px;top:285.80px;width:58.30px"><div class="pill" style="width:41.90px"></div><svg class="bi" width="8" height="17" viewBox="0 0 8 17"><path d="M0.4 3.6H3" stroke="#6a6a6a" stroke-width="1" fill="none"/><path d="M2.6 1.2L5 3.6L2.6 6ZM7.2 1.2L4.8 3.6L7.2 6Z" fill="#6a6a6a"/><rect x="0.6" y="9.2" width="6.8" height="5.8" fill="#c6d2de"/><path d="M1.6 12.2H2.6M3.8 12.2H6.4M1.6 14H2.4M3.8 14H6.4" stroke="#5a6f8c" stroke-width=".9"/></svg><i class="tail"></i></div>
<span class="t tb" style="left:2246.20px;top:291.04px;transform:scaleX(0.9596);">Patrol</span>
<svg class="lines" width="2724" height="986" viewBox="0 0 2724 986"><path d="M1557.20 99.00L1557.20 115.20" stroke="#f2f2f2" stroke-width="1.6" fill="none"/><path d="M1557.20 121.80L1552.35 113.20L1562.05 113.20Z" fill="#fafafa"/><path d="M1514.00 191.20L870.92 294.16" stroke="#f2f2f2" stroke-width="1.6" fill="none"/><path d="M864.40 295.20L872.13 289.05L873.66 298.63Z" fill="#fafafa"/><path d="M1589.20 184.60L1801.99 307.60" stroke="#f2f2f2" stroke-width="1.6" fill="none"/><path d="M1807.70 310.90L1797.83 310.80L1802.68 302.40Z" fill="#fafafa"/><path d="M1589.40 183.20L2244.62 309.65" stroke="#f2f2f2" stroke-width="1.6" fill="none"/><path d="M2251.10 310.90L2241.74 314.03L2243.57 304.51Z" fill="#fafafa"/><path d="M802.10 408.30L802.10 414.60" stroke="#f2f2f2" stroke-width="1.6" fill="none"/><path d="M802.10 421.20L797.25 412.60L806.95 412.60Z" fill="#fafafa"/><path d="M760.60 493.00L544.61 626.53" stroke="#f2f2f2" stroke-width="1.6" fill="none"/><path d="M539.00 630.00L543.76 621.35L548.87 629.60Z" fill="#fafafa"/><path d="M832.20 489.00L990.63 726.21" stroke="#f2f2f2" stroke-width="1.6" fill="none"/><path d="M994.30 731.70L985.49 727.24L993.56 721.85Z" fill="#fafafa"/><path d="M279.90 781.70L61.60 891.53" stroke="#f2f2f2" stroke-width="1.6" fill="none"/><path d="M55.70 894.50L61.20 886.30L65.56 894.97Z" fill="#fafafa"/><path d="M300.30 782.60L254.92 897.86" stroke="#f2f2f2" stroke-width="1.6" fill="none"/><path d="M252.50 904.00L251.14 894.22L260.16 897.77Z" fill="#fafafa"/><path d="M364.10 782.30L346.23 908.37" stroke="#f2f2f2" stroke-width="1.6" fill="none"/><path d="M345.30 914.90L341.71 905.70L351.31 907.07Z" fill="#fafafa"/><path d="M440.90 781.20L440.90 895.60" stroke="#f2f2f2" stroke-width="1.6" fill="none"/><path d="M440.90 902.20L436.05 893.60L445.75 893.60Z" fill="#fafafa"/><path d="M504.60 779.00L559.40 906.73" stroke="#f2f2f2" stroke-width="1.6" fill="none"/><path d="M562.00 912.80L554.15 906.81L563.07 902.98Z" fill="#fafafa"/><path d="M542.10 776.30L663.28 894.88" stroke="#f2f2f2" stroke-width="1.6" fill="none"/><path d="M668.00 899.50L658.46 896.95L665.25 890.02Z" fill="#fafafa"/><path d="M1016.10 866.00L1008.44 886.23" stroke="#f2f2f2" stroke-width="1.6" fill="none"/><path d="M1006.10 892.40L1004.61 882.64L1013.68 886.08Z" fill="#fafafa"/><path d="M1096.90 866.00L1096.90 907.80" stroke="#f2f2f2" stroke-width="1.6" fill="none"/><path d="M1096.90 914.40L1092.05 905.80L1101.75 905.80Z" fill="#fafafa"/><path d="M1185.40 865.00L1197.22 907.24" stroke="#f2f2f2" stroke-width="1.6" fill="none"/><path d="M1199.00 913.60L1192.01 906.63L1201.35 904.01Z" fill="#fafafa"/><path d="M1192.30 857.90L1392.91 909.36" stroke="#f2f2f2" stroke-width="1.6" fill="none"/><path d="M1399.30 911.00L1389.76 913.56L1392.17 904.17Z" fill="#fafafa"/><path d="M1803.80 468.70L1717.11 507.88" stroke="#f2f2f2" stroke-width="1.6" fill="none"/><path d="M1711.10 510.60L1716.94 502.64L1720.93 511.48Z" fill="#fafafa"/><path d="M1885.40 468.10L1885.40 499.80" stroke="#f2f2f2" stroke-width="1.6" fill="none"/><path d="M1885.40 506.40L1880.55 497.80L1890.25 497.80Z" fill="#fafafa"/><path d="M2256.20 445.50L2234.00 478.24" stroke="#f2f2f2" stroke-width="1.6" fill="none"/><path d="M2230.30 483.70L2231.11 473.86L2239.14 479.30Z" fill="#fafafa"/><path d="M2338.80 443.90L2338.80 499.70" stroke="#f2f2f2" stroke-width="1.6" fill="none"/><path d="M2338.80 506.30L2333.95 497.70L2343.65 497.70Z" fill="#fafafa"/><path d="M2431.00 444.00L2431.00 498.90" stroke="#f2f2f2" stroke-width="1.6" fill="none"/><path d="M2431.00 505.50L2426.15 496.90L2435.85 496.90Z" fill="#fafafa"/><path d="M2449.70 436.80L2628.99 500.98" stroke="#f2f2f2" stroke-width="1.6" fill="none"/><path d="M2635.20 503.20L2625.47 504.87L2628.74 495.74Z" fill="#fafafa"/></svg>
<div class="bdg" style="left:1591.20px;top:124.20px;width:12px"><span>0</span></div>
<div class="bdg" style="left:871.20px;top:292.10px;width:12px"><span>1</span></div>
<div class="bdg" style="left:871.20px;top:340.10px;width:12px"><span>2</span></div>
<div class="bdg" style="left:834.30px;top:424.40px;width:12px"><span>3</span></div>
<div class="bdg" style="left:543.90px;top:629.10px;width:12px"><span>4</span></div>
<div class="bdg" style="left:543.90px;top:677.10px;width:12px"><span>5</span></div>
<div class="bdg" style="left:543.90px;top:713.30px;width:12px"><span>6</span></div>
<div class="bdg" style="left:1187.30px;top:737.50px;width:14.6px"><span>13</span></div>
<div class="bdg" style="left:1187.30px;top:770.30px;width:14.6px"><span>14</span></div>
<div class="bdg" style="left:2060.70px;top:316.30px;width:14.6px"><span>19</span></div>
<div class="bdg" style="left:2060.70px;top:364.30px;width:14.6px"><span>20</span></div>
<div class="bdg" style="left:2060.70px;top:400.50px;width:14.6px"><span>21</span></div>
<div class="bdg" style="left:2448.10px;top:316.00px;width:14.6px"><span>24</span></div>
<div class="bdg" style="left:2448.10px;top:348.80px;width:14.6px"><span>25</span></div>
<div class="bdg" style="left:60.70px;top:893.20px;width:12px"><span>7</span></div>
<div class="bdg" style="left:255.80px;top:905.10px;width:12px"><span>8</span></div>
<div class="bdg" style="left:348.80px;top:917.30px;width:12px"><span>9</span></div>
<div class="bdg" style="left:530.10px;top:905.10px;width:14.6px"><span>10</span></div>
<div class="bdg" style="left:623.80px;top:917.30px;width:14.6px"><span>11</span></div>
<div class="bdg" style="left:836.30px;top:905.10px;width:14.6px"><span>12</span></div>
<div class="bdg" style="left:1008.70px;top:893.20px;width:14.6px"><span>15</span></div>
<div class="bdg" style="left:1155.10px;top:917.30px;width:14.6px"><span>16</span></div>
<div class="bdg" style="left:1379.90px;top:917.30px;width:14.6px"><span>17</span></div>
<div class="bdg" style="left:1546.50px;top:917.30px;width:14.6px"><span>18</span></div>
<div class="bdg" style="left:1715.60px;top:509.60px;width:14.6px"><span>22</span></div>
<div class="bdg" style="left:1898.70px;top:509.60px;width:14.6px"><span>23</span></div>
<div class="bdg" style="left:2232.80px;top:484.50px;width:14.6px"><span>26</span></div>
<div class="bdg" style="left:2378.90px;top:509.60px;width:14.6px"><span>27</span></div>
<div class="bdg" style="left:2603.90px;top:509.60px;width:14.6px"><span>28</span></div>
<div class="bdg" style="left:2782.50px;top:509.60px;width:14.6px"><span>29</span></div><svg class="ic" style="left:1552px;top:975px" width="12" height="12" viewBox="0 0 12 12"><path d="M10 1.75L-0.25 12M10 5.2L3.2 12M10 8.4L6.4 12" stroke="#f4f4f4" stroke-width="1.25" fill="none"/></svg>
<div class="vig"></div></div></body></html>
